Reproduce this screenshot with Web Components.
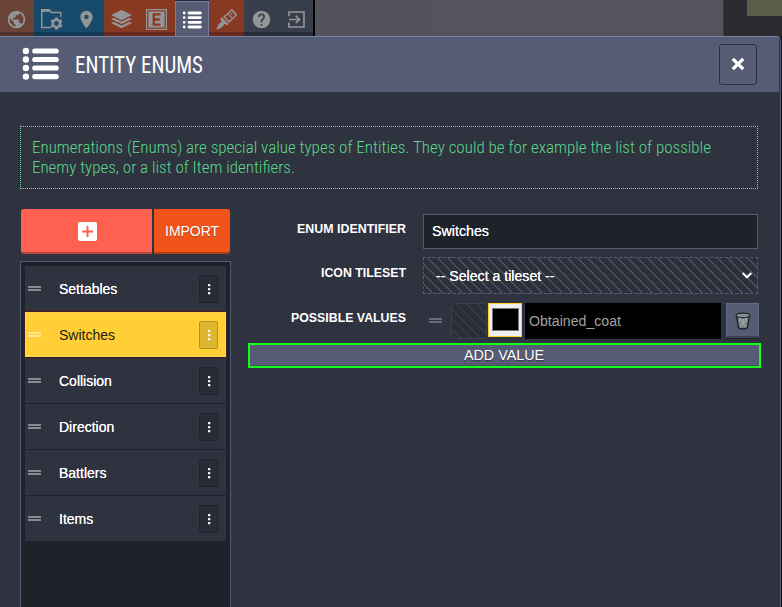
<!DOCTYPE html>
<html lang="en"><head><meta charset="utf-8"><title>Entity Enums</title>
<style>
html,body{margin:0;height:100%;overflow:hidden;background:#0b0d0f;font-family:"Liberation Sans",Arial,sans-serif;color:#fff}
</style></head><body>
<editor-app></editor-app>
<script>
function define(name, html, init){
  const t=document.createElement('template'); t.innerHTML=html;
  customElements.define(name, class extends HTMLElement{
    connectedCallback(){
      if(this.shadowRoot) return;
      this.attachShadow({mode:'open'}).append(t.content.cloneNode(true));
      if(init) init.call(this,this.shadowRoot);
    }
  });
}
define('editor-app',`<style>
:host{display:flex;flex-direction:column;width:782px;height:607px;position:relative;overflow:hidden}
.top{display:flex;height:36px;background:#2b2a2f;flex:none}
.gap{width:2px;background:#000}.view{width:408px;background:linear-gradient(90deg,#54525b,#56535d);border-right:1px solid #3b3a40}
.tile{margin-left:auto;width:35px;height:16px;background:#5d5e48}
enum-panel{flex:1;width:781px;box-sizing:border-box}
</style>
<div class="top"><tool-bar></tool-bar><div class="gap"></div><div class="view"></div><div class="tile"></div></div>
<enum-panel></enum-panel>`);

define('tool-bar',`<style>
:host{display:flex;width:313px;height:36px;color:#949597}
div{box-sizing:border-box;height:36px;display:flex;justify-content:center;padding-top:9px;flex:none;background:linear-gradient(var(--c) 32px,var(--d) 32px)}
svg{width:21px;height:21px;overflow:visible;display:block}
.w{--c:#6a4238;--d:#51312b;width:34px;padding-right:1px}.b{--c:#184b6b;--d:#133a53;width:35px}.r{--c:#873922;--d:#672b1d;width:35px}.g{--c:#373d4b;--d:#282c36;width:35px}
.a{width:34px;background:#555c74;border:1px solid #7080a8;border-bottom:0;color:#fff;padding-top:8px;margin-top:1px;height:35px}
.a svg{margin-top:-1px}
.r.f{width:36px}
</style>
<div class="w"><svg viewBox="0 0 24 24" fill="currentColor"><path d="M12 2a10 10 0 1 0 0 20 10 10 0 0 0 0-20zm-1 17.93A8 8 0 0 1 4.2 10.2L9 15v1a2 2 0 0 0 2 2zm6.9-2.53A2 2 0 0 0 16 16h-1v-3a1 1 0 0 0-1-1H8v-2h2a1 1 0 0 0 1-1V7h2a2 2 0 0 0 2-2v-.4a8 8 0 0 1 2.9 12.8z"/></svg></div>
<div class="b"><svg viewBox="0 0 21 21" fill="none" stroke="currentColor"><path d="M10 18.5H.7V.8h7.8l1.8 2.7h9.5V8" stroke-width="1.4"/><path d="M.7 1.6h8" stroke-width="2.4"/><circle cx="15.5" cy="14.5" r="3.6" stroke-width="2.4"/><path d="M15.5 8.5v2m0 8v2M10.3 11.5l1.7 1m7 4l1.7 1m0-6l-1.7 1m-7 4l-1.7 1" stroke-width="3"/></svg></div>
<div class="b"><svg viewBox="0 0 24 24" fill="currentColor"><path d="M12 2a7 7 0 0 0-7 7c0 5.25 7 13 7 13s7-7.75 7-13a7 7 0 0 0-7-7zm0 9.5a2.5 2.5 0 1 1 0-5 2.5 2.5 0 0 1 0 5z"/></svg></div>
<div class="r"><svg viewBox="0 0 21 21" fill="currentColor"><path d="M10.5 1L21 6.1 10.5 11.2 0 6.1z"/><path d="M0 10l2.7-1.3 7.8 3.8 7.8-3.8L21 10l-10.5 5.1z"/><path d="M0 14.1l2.7-1.3 7.8 3.8 7.8-3.8 2.7 1.3-10.5 5.1z"/></svg></div>
<div class="r f" style="padding-right:1px"><svg viewBox="0 0 21 21"><rect x=".6" y=".6" width="19.8" height="19.8" fill="none" stroke="currentColor" stroke-width="1.2"/><path fill="currentColor" d="M2.4 2.4h16.2v16.2H2.4z"/><path d="M14.5 5.4H7.7v10.2h6.8M7.7 10.5h6" fill="none" stroke="#873922" stroke-width="2.3"/></svg></div>
<div class="a"><svg viewBox="0 0 21 21" stroke="#fff" stroke-linecap="round" stroke-width="2.8"><path d="M2.2 4h.01M2.2 8.6h.01M2.2 13.3h.01M2.2 18h.01M7 4h11.4M7 8.6h11.4M7 13.3h11.4M7 18h11.4"/></svg></div>
<div class="r"><svg viewBox="0 0 21 21" fill="none" stroke="currentColor"><path d="M8.3 7.8L15.8.8l4.6 5-7.2 7.2z" stroke-width="1.5"/><path d="M12.2 5.2l3.8 3.7M14.5 4l1.4 1.4M17 3l1.5 1.6" stroke-width="1.3"/><path fill="currentColor" stroke="none" d="M5.9 8.3l6.8 6.6-1.6 1.6-2.6-1.7C7.5 17.8 4.5 20 0 20.5c1.7-2 1.5-5.7 6-7.8l-1.8-2.6z"/></svg></div>
<div class="g"><svg viewBox="0 0 24 24" fill="currentColor"><path d="M12 2a10 10 0 1 0 0 20 10 10 0 0 0 0-20zm1 17h-2v-2h2zm2.07-7.75l-.9.92C13.45 12.9 13 13.5 13 15h-2v-.5c0-1.1.45-2.1 1.17-2.83l1.24-1.26A2 2 0 1 0 10 9H8a4 4 0 1 1 8 0c0 .88-.36 1.68-.93 2.25z"/></svg></div>
<div class="g" style="width:34px"><svg viewBox="0 0 21 21" fill="none" stroke="currentColor" stroke-width="1.7"><path d="M3 7.2V3h15v15H3v-4.2M3 10.5h10.5M9.8 6.8l3.8 3.7-3.8 3.7"/></svg></div>`);

define('fit-text',`<style>:host{display:inline-block;white-space:nowrap;flex:none}span{display:inline-block;transform-origin:0 50%}</style><span><slot></slot></span>`,
function(r){const s=r.querySelector('span'),w=+this.getAttribute('w');const n=s.getBoundingClientRect().width;if(w&&n){s.style.transform='scaleX('+w/n+')';this.style.width=w+'px'}});

define('enum-panel',`<style>
:host{display:block;background:#2f323f;border-top:1px solid #7080a8;border-right:1px solid #525c7c;border-radius:0 4px 0 0;overflow:hidden}
header{height:55px;background:#555c74;display:flex;align-items:center;padding:0 22px;margin-right:1px}
header>svg{width:37px;height:33px;flex:none;margin-top:-2px}
h1{margin:1px 0 0 16px;font:430 23.5px/30px "Roboto Condensed",Roboto,sans-serif;font-stretch:condensed;height:30px}
button{font:inherit;color:#fff}
.x{margin-left:auto;width:38px;height:41px;border:1px solid #2c303c;border-radius:3px;background:none;padding:0 0 2px;display:grid;place-items:center}
.info{margin:34px 22px 0 20px;box-sizing:border-box;height:63px;border:1px dotted #63e495;padding:10px 11px;color:#5bd88b;font:350 17px/20px "Roboto Condensed",Roboto,sans-serif;font-stretch:condensed;display:flex;flex-direction:column}
main{display:grid;grid-template-columns:211px 513px;column-gap:17px;padding:20px 0 0 20px}
</style>
<header><svg viewBox="0 0 37 33" stroke="#fff" stroke-linecap="round"><path stroke-width="6.4" d="M3.9 4h.01M3.9 12.5h.01M3.9 21h.01M3.9 29.6h.01"/><path stroke-width="5.2" d="M12.8 4h21.4M12.8 12.5h21.4M12.8 21h21.4M12.8 29.6h21.4"/></svg>
<h1><fit-text w="128">ENTITY ENUMS</fit-text></h1>
<button class="x"><svg width="14" height="14" viewBox="0 0 14 14" stroke="#fff" stroke-width="3.3"><path d="M1.8 1.8l10.4 10.4M12.2 1.8L1.8 12.2"/></svg></button></header>
<div class="info"><fit-text w="679">Enumerations (Enums) are special value types of Entities. They could be for example the list of possible</fit-text><fit-text w="263">Enemy types, or a list of Item identifiers.</fit-text></div>
<main><enum-list></enum-list><enum-form></enum-form></main>`);

define('enum-list',`<style>
:host{display:block}
.btns{display:flex;gap:2px;margin:0 1px 7px}
button{height:45px;border:0;border-bottom:2px solid #0004;color:#fff;font:14px "Liberation Sans",Arial,sans-serif;padding:0;display:grid;place-items:center;text-shadow:0 1px 1px #0004}
.add{width:131px;background:#ff6150;border-radius:3px 0 0 3px;padding:1px 0 0 1px}.imp{width:76px;background:#f0541a;border-radius:0 3px 3px 0}
.list{border:1px solid #525a76;background:#1e2229;height:370px;padding:4px;box-sizing:border-box}
</style>
<div class="btns"><button class="add"><svg width="19" height="19" viewBox="0 0 19 19"><rect width="19" height="19" rx="2" fill="#fff"/><path d="M9.5 4v11M4 9.5h11" stroke="#ff6150" stroke-width="2"/></svg></button><button class="imp"><fit-text w="54">IMPORT</fit-text></button></div>
<div class="list"><enum-row w="59">Settables</enum-row><enum-row w="56" class="on">Switches</enum-row><enum-row w="53">Collision</enum-row><enum-row w="56">Direction</enum-row><enum-row w="48">Battlers</enum-row><enum-row w="34">Items</enum-row></div>`);

define('enum-row',`<style>
:host{display:flex;align-items:center;height:46px;box-sizing:border-box;border-bottom:1px solid #1e2229;background:#2f323f;padding:0 8px 0 3px;font-size:14px;text-shadow:0 0 .5px #fff}
:host(.on){background:#ffcf35;color:#201c10;box-shadow:0 0 2px 1px #70202488,inset 0 0 2px #ffe080;text-shadow:none;position:relative}
i{width:13px;height:5px;border:solid #888a91;border-width:2px 0;box-sizing:border-box;margin:0 18px 0 0}
:host(.on) i{border-color:#ffe68d}
b{margin-left:auto;width:19px;height:28px;box-sizing:border-box;border:1px solid #20242c;border-radius:2px;background:#292c36;display:grid;place-items:center;padding:1px 0 0 1px}
:host(.on) b{background:#dfb62f;border-color:#b39226}
</style><i></i><fit-text><slot></slot></fit-text><b><svg width="3" height="11" viewBox="0 0 3 11" fill="#fff"><rect width="2.3" height="2.3" rx=".6"/><rect y="4" width="2.3" height="2.3" rx=".6"/><rect y="8" width="2.3" height="2.3" rx=".6"/></svg></b>`,
function(r){r.querySelector('fit-text').setAttribute('w',this.getAttribute('w'))});

define('enum-form',`<style>
:host{display:block;padding-top:5px}
.row{display:grid;grid-template-columns:158px 335px;column-gap:17px}
.lab{text-align:right;font:bold 12.5px/15px "Liberation Sans",Arial,sans-serif;padding-top:8px}
.in{height:35px;box-sizing:border-box;border:1px solid #555c74;background:#1e2229;padding:0 8px 2px;display:flex;align-items:center;font-size:14px;text-shadow:0 0 .5px #fff}
.sel{height:37px;margin-top:8px;box-sizing:border-box;border:1px dashed #555c74;display:flex;align-items:center;justify-content:space-between;padding:0 5px 0 12px;font-size:14px;text-shadow:0 0 .5px #fff;background:repeating-linear-gradient(45deg,#2c303b 0 5.2px,#50545f 5.8px 6.4px,#2c303b 7.07px)}
.vals{display:flex;margin:9px -1px 0 0;height:36px;padding-left:6px}
.vals i{width:13px;height:5px;border:solid #696c76;border-width:2px 0;box-sizing:border-box;margin:15px 9px 0 0}
.tile{width:36px;height:36px;box-sizing:border-box;border:1px solid #3c404c;border-radius:4px;background:repeating-linear-gradient(45deg,#2a2e38 0 5.4px,#3e424d 6px 6.5px,#2a2e38 7.07px)}
.col{box-sizing:border-box;width:34px;height:34px;border:1px solid #ffcc33;background:#efefef;padding:4px 2px 5px 3px;margin:0 3px 0 1px}
.col div{box-sizing:border-box;height:23px;border:1px solid #777;background:#000}
.name{width:196px;background:#000;color:#a2a2a2;display:flex;align-items:center;padding-left:4px;box-sizing:border-box;font-size:14px}
.del{margin-left:5px;width:33px;height:35px;box-sizing:border-box;background:#555c74;border:1px solid #626c8a;border-bottom:2px solid #3c4253;box-shadow:0 1px 1px #20242c;padding:1px 0 0;display:grid;place-items:center}
.addv{display:grid;place-items:center;width:513px;height:25px;box-sizing:border-box;border:2px solid #12ff1c;background:#555c74;margin-top:4px;font:14px "Liberation Sans",Arial,sans-serif;color:#fff;padding:0 2px 2px 0;box-shadow:inset 0 -1px #464c60;text-shadow:0 1px 1px #0006}
</style>
<div class="row"><div class="lab"><fit-text w="109">ENUM IDENTIFIER</fit-text></div><div class="in"><fit-text w="57">Switches</fit-text></div></div>
<div class="row"><div class="lab" style="padding-top:17px"><fit-text w="85">ICON TILESET</fit-text></div><div class="sel"><fit-text w="118.5">-- Select a tileset --</fit-text><svg width="10" height="7" viewBox="0 0 10 7" fill="none" stroke="#fff" stroke-width="2"><path d="M.7 1L5 5.3 9.3 1"/></svg></div></div>
<div class="row"><div class="lab" style="padding-top:17px"><fit-text w="115">POSSIBLE VALUES</fit-text></div>
<div class="vals"><i></i><div class="tile"></div><div class="col"><div></div></div><div class="name"><fit-text w="92">Obtained_coat</fit-text></div>
<button class="del"><svg width="16" height="18" viewBox="0 0 16 18"><path d="M1.5 3.5l2 12.2c1.2 1.7 7.8 1.7 9 0l2-12.2z" fill="#717c80" stroke="#202326" stroke-width="1.4"/><path d="M4 6l6 9M6.5 6l5 8M10 6l2 4M12 6l-6 9M9.5 6l-5 8M6 6l-2 4" stroke="#a9b4b6" stroke-width=".8"/><ellipse cx="8" cy="3.4" rx="6.9" ry="2.3" fill="#94a0a2" stroke="#202326" stroke-width="1.2"/><ellipse cx="8" cy="3.3" rx="4.8" ry=".8" fill="#78858a"/></svg></button></div></div>
<button class="addv"><fit-text w="80">ADD VALUE</fit-text></button>`);
</script></body></html>
